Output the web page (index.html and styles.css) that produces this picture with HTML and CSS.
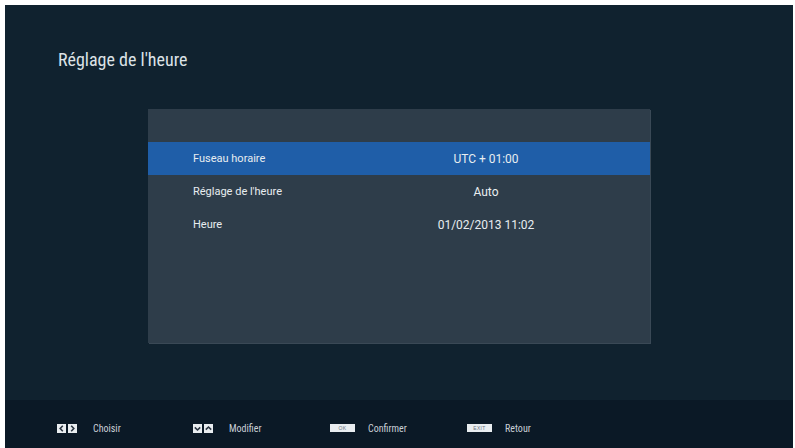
FILE: index.html
```html
<!DOCTYPE html>
<html lang="fr">
<head>
<meta charset="utf-8">
<link rel="stylesheet" href="styles.css">
</head>
<body>
<div class="screen">
  <div class="main">
    <h1 class="title">Réglage de l'heure</h1>
    <div class="panel">
      <div class="row selected"><span class="label">Fuseau horaire</span><span class="value">UTC + 01:00</span></div>
      <div class="row"><span class="label">Réglage de l'heure</span><span class="value">Auto</span></div>
      <div class="row"><span class="label">Heure</span><span class="value">01/02/2013 11:02</span></div>
    </div>
  </div>
  <div class="footer">
    <div class="hint">
      <span class="keys">
        <span class="key"><svg viewBox="0 0 9 9" width="9" height="9"><path d="M5.8 1.8 L3.2 4.5 L5.8 7.2" fill="none" stroke="#2a3440" stroke-width="1.6"/></svg></span>
        <span class="key"><svg viewBox="0 0 9 9" width="9" height="9"><path d="M3.2 1.8 L5.8 4.5 L3.2 7.2" fill="none" stroke="#2a3440" stroke-width="1.6"/></svg></span>
      </span>
      <span class="hint-text">Choisir</span>
    </div>
    <div class="hint">
      <span class="keys">
        <span class="key"><svg viewBox="0 0 9 9" width="9" height="9"><path d="M1.8 3.4 L4.5 6 L7.2 3.4" fill="none" stroke="#2a3440" stroke-width="1.6"/></svg></span>
        <span class="key"><svg viewBox="0 0 9 9" width="9" height="9"><path d="M1.8 5.6 L4.5 3 L7.2 5.6" fill="none" stroke="#2a3440" stroke-width="1.6"/></svg></span>
      </span>
      <span class="hint-text">Modifier</span>
    </div>
    <div class="hint">
      <span class="key wide">OK</span>
      <span class="hint-text">Confirmer</span>
    </div>
    <div class="hint">
      <span class="key wide">EXIT</span>
      <span class="hint-text">Retour</span>
    </div>
  </div>
</div>
</body>
</html>
```

FILE: styles.css
```css
html, body {
  margin: 0;
  padding: 0;
  background: #ffffff;
}
body {
  font-family: "Roboto Condensed", "Liberation Sans Narrow", "Liberation Sans", Arial, sans-serif;
  font-stretch: condensed;
  color: #e4e9ec;
}
.screen {
  margin: 5px 2px 0 5px;
  height: 443px;
  display: flex;
  flex-direction: column;
  background: #10222f;
}
.main {
  flex: 1;
  padding: 45px 0 0 53px;
}
.title {
  margin: 0;
  font-size: 18px;
  line-height: 20px;
  font-weight: normal;
  color: #dde3e7;
}
.panel {
  margin: 39px 0 0 90px;
  width: 502px;
  height: 234px;
  box-sizing: border-box;
  padding-top: 33px;
  background: #2e3d4a;
  box-shadow: 1px 1px 0 #3a4956;
}
.row {
  display: flex;
  align-items: center;
  height: 33px;
  font-family: Roboto, "Liberation Sans", Arial, sans-serif;
  font-stretch: normal;
  color: #e8edf0;
}
.row.selected {
  background: #1f5ea8;
}
.label {
  box-sizing: border-box;
  width: 278px;
  padding-left: 45px;
  font-size: 11px;
}
.value {
  width: 120px;
  text-align: center;
  font-size: 12px;
}
.footer {
  height: 48px;
  box-sizing: border-box;
  padding: 23px 0 0 52px;
  background: #0b1926;
  display: grid;
  grid-template-columns: 136px 137px 137px 137px;
  align-items: start;
}
.hint {
  display: flex;
  align-items: center;
  height: 10px;
}
.keys {
  display: flex;
  gap: 2px;
  margin-right: 16px;
}
.key {
  display: flex;
  align-items: center;
  justify-content: center;
  width: 9px;
  height: 9px;
  background: #e9edf0;
}
.key.wide {
  width: 25px;
  height: 8px;
  font-size: 5px;
  color: #6c7680;
  letter-spacing: 0.3px;
  margin-right: 13px;
  font-family: "Liberation Sans", Arial, sans-serif;
}
.hint-text {
  font-size: 10px;
  color: #c9d0d6;
}
```
